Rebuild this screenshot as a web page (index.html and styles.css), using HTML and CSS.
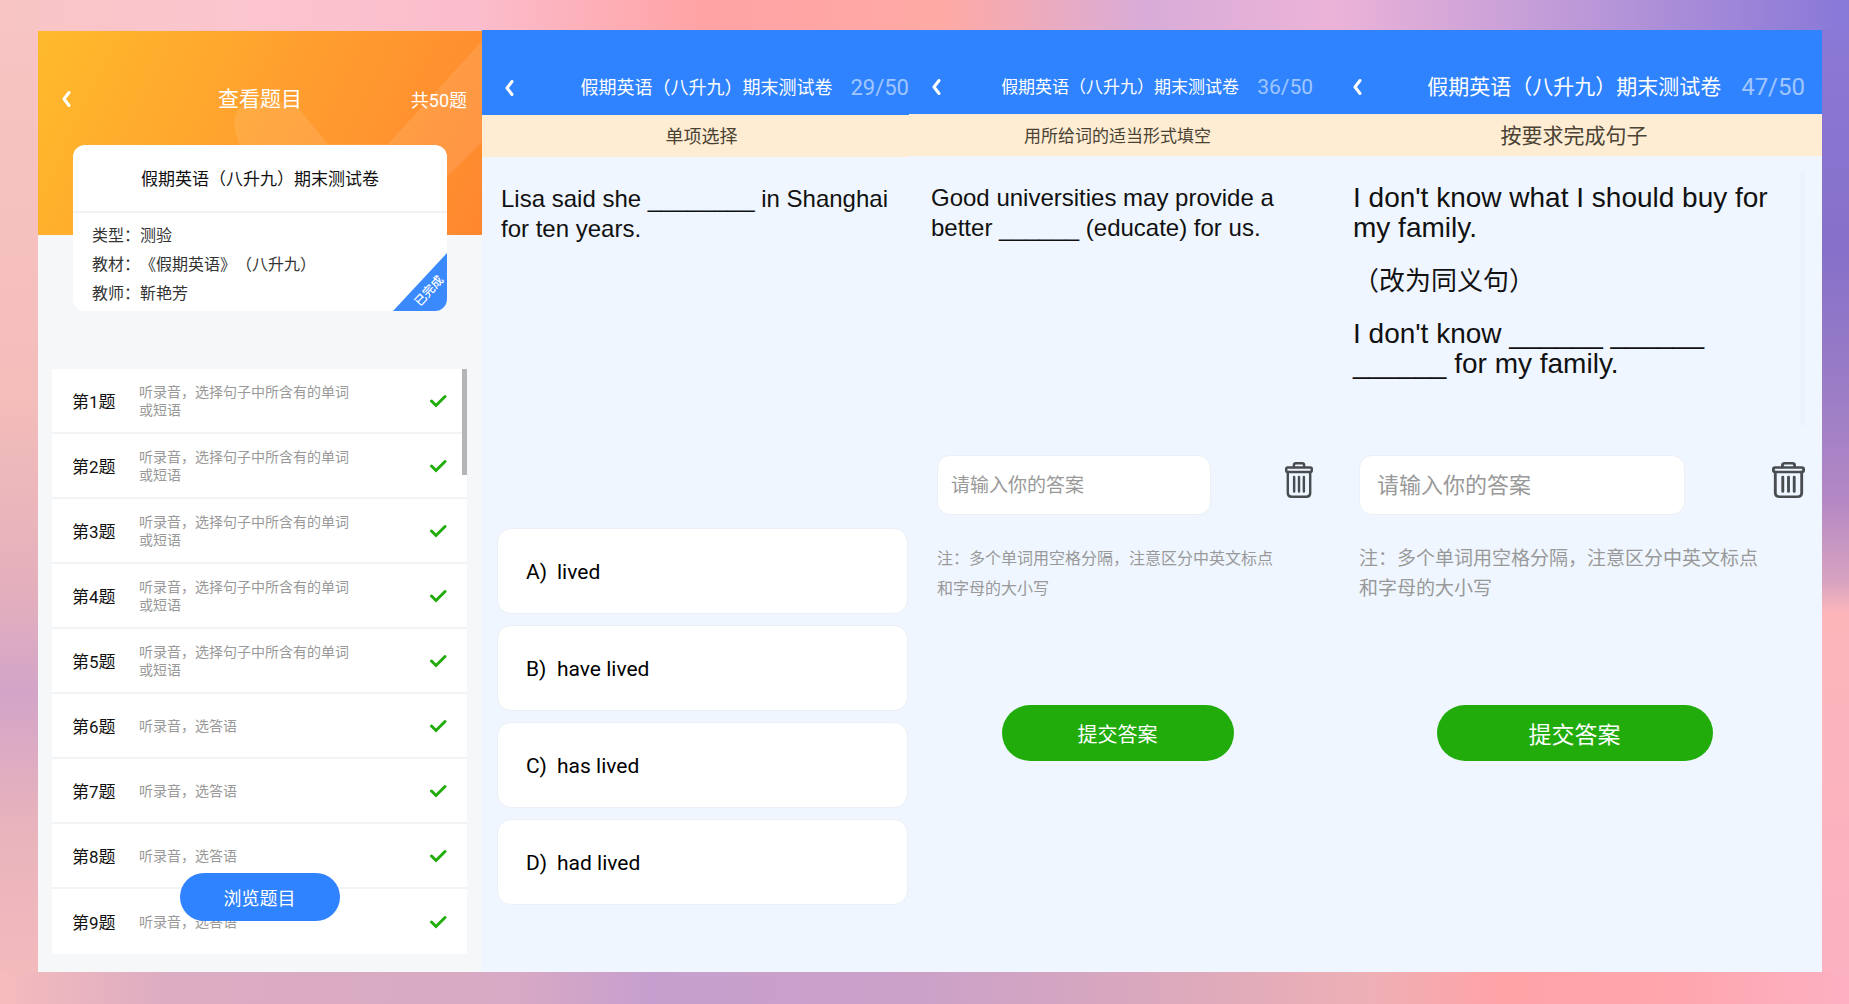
FILE: index.html
```html
<!DOCTYPE html>
<html lang="zh-CN">
<head>
  <meta charset="UTF-8" />
  <meta name="viewport" content="width=device-width, initial-scale=1" />
  <title>假期英语（八升九）期末测试卷</title>
  <link rel="stylesheet" href="styles.css">
</head>
<body>
  <!-- 图标 -->
  <svg class="sprite" aria-hidden="true">
    <symbol id="icon-back" viewBox="0 0 10 18">
      <path d="M8 2.500 L3 9 L8 15.500" fill="none" stroke="#fff" stroke-width="3" stroke-linecap="round" stroke-linejoin="round" />
    </symbol>
    <symbol id="icon-check" viewBox="0 0 18 14">
      <path d="M2.5 7 L7 11.5 L16 2.5" fill="none" stroke="#21ac0c" stroke-width="3" stroke-linecap="round" stroke-linejoin="miter" />
    </symbol>
    <symbol id="icon-trash" viewBox="0 0 30 36" preserveAspectRatio="none">
      <g fill="none" stroke="#4a4d50" stroke-width="2.6" stroke-linejoin="round" stroke-linecap="round">
        <path d="M9.5 5 V3 Q9.5 1.3 11.5 1.3 H18.5 Q20.5 1.3 20.5 3 V5" />
        <rect x="1.3" y="5.5" width="27.4" height="4.5" rx="1.5" />
        <path d="M3 10 V31 Q3 34.7 7 34.7 H23 Q27 34.7 27 31 V10" />
        <path d="M9.8 15 V29.5 M15 15 V29.5 M20.2 15 V29.5" />
      </g>
    </symbol>
  </svg>

  <main class="screens">
    <!-- 题目列表 -->
    <section class="screen screen-list" aria-label="查看题目">
      <div class="list-banner">
        <svg class="banner-shapes" viewBox="0 0 444 204" preserveAspectRatio="none" aria-hidden="true">
          <path d="M196 90 Q198 70 225 70 L256 72 L290 113 L350 113 L444 10 V111 L350 204 H290 Q200 150 196 90 Z" fill="#fff" fill-opacity="0.1" />
        </svg>
        <header class="list-header">
          <button class="back" type="button" aria-label="返回"><svg><use href="#icon-back" /></svg></button>
          <h1>查看题目</h1>
          <span class="total">共50题</span>
        </header>
      </div>

      <article class="paper-card">
        <h2>假期英语（八升九）期末测试卷</h2>
        <div class="paper-info">
          <p>类型：测验</p>
          <p>教材：《假期英语》（八升九）</p>
          <p>教师：靳艳芳</p>
        </div>
        <div class="ribbon"><span>已完成</span></div>
      </article>

      <div class="question-wrap">
        <ul class="question-list">
          <li><b>第1题</b><span>听录音，选择句子中所含有的单词或短语</span><svg><use href="#icon-check" /></svg></li>
          <li><b>第2题</b><span>听录音，选择句子中所含有的单词或短语</span><svg><use href="#icon-check" /></svg></li>
          <li><b>第3题</b><span>听录音，选择句子中所含有的单词或短语</span><svg><use href="#icon-check" /></svg></li>
          <li><b>第4题</b><span>听录音，选择句子中所含有的单词或短语</span><svg><use href="#icon-check" /></svg></li>
          <li><b>第5题</b><span>听录音，选择句子中所含有的单词或短语</span><svg><use href="#icon-check" /></svg></li>
          <li><b>第6题</b><span>听录音，选答语</span><svg><use href="#icon-check" /></svg></li>
          <li><b>第7题</b><span>听录音，选答语</span><svg><use href="#icon-check" /></svg></li>
          <li><b>第8题</b><span>听录音，选答语</span><svg><use href="#icon-check" /></svg></li>
          <li><b>第9题</b><span>听录音，选答语</span><svg><use href="#icon-check" /></svg></li>
        </ul>
        <div class="scroll-thumb"></div>
        <button class="browse" type="button">浏览题目</button>
      </div>
    </section>

    <!-- 单项选择 -->
    <section class="screen screen-choice" aria-label="单项选择">
      <header class="quiz-header">
        <button class="back" type="button" aria-label="返回"><svg><use href="#icon-back" /></svg></button>
        <h2>假期英语（八升九）期末测试卷</h2>
        <span class="progress">29/50</span>
      </header>
      <h3 class="quiz-type">单项选择</h3>
      <div class="quiz-body">
        <div class="question">
          <p>Lisa said she ________ in Shanghai<br>for ten years.</p>
        </div>
        <div class="options">
          <button type="button"><span>A)</span>lived</button>
          <button type="button"><span>B)</span>have lived</button>
          <button type="button"><span>C)</span>has lived</button>
          <button type="button"><span>D)</span>had lived</button>
        </div>
      </div>
    </section>

    <!-- 适当形式填空 -->
    <section class="screen screen-fill" aria-label="用所给词的适当形式填空">
      <header class="quiz-header">
        <button class="back" type="button" aria-label="返回"><svg><use href="#icon-back" /></svg></button>
        <h2>假期英语（八升九）期末测试卷</h2>
        <span class="progress">36/50</span>
      </header>
      <h3 class="quiz-type">用所给词的适当形式填空</h3>
      <div class="quiz-body">
        <div class="question">
          <p>Good universities may provide a<br>better ______ (educate) for us.</p>
        </div>
        <form class="answer">
          <div class="answer-row">
            <input type="text" placeholder="请输入你的答案" aria-label="答案" />
            <button class="trash" type="button" aria-label="清空"><svg><use href="#icon-trash" /></svg></button>
          </div>
          <p class="note">注：多个单词用空格分隔，注意区分中英文标点<br>和字母的大小写</p>
          <button class="submit" type="button">提交答案</button>
        </form>
      </div>
    </section>

    <!-- 按要求完成句子 -->
    <section class="screen screen-rewrite" aria-label="按要求完成句子">
      <header class="quiz-header">
        <button class="back" type="button" aria-label="返回"><svg><use href="#icon-back" /></svg></button>
        <h2>假期英语（八升九）期末测试卷</h2>
        <span class="progress">47/50</span>
      </header>
      <h3 class="quiz-type">按要求完成句子</h3>
      <div class="quiz-body">
        <div class="question">
          <p>I don't know what I should buy for<br>my family.</p>
          <p class="hint">（改为同义句）</p>
          <p>I don't know ______ ______<br>______ for my family.</p>
        </div>
        <form class="answer">
          <div class="answer-row">
            <input type="text" placeholder="请输入你的答案" aria-label="答案" />
            <button class="trash" type="button" aria-label="清空"><svg><use href="#icon-trash" /></svg></button>
          </div>
          <p class="note">注：多个单词用空格分隔，注意区分中英文标点<br>和字母的大小写</p>
          <button class="submit" type="button">提交答案</button>
        </form>
      </div>
    </section>
  </main>
</body>
</html>
```

FILE: styles.css
```css
* {
  box-sizing: border-box;
  margin: 0;
  padding: 0;
}

body {
  font-family: Roboto, 'Noto Sans CJK SC', sans-serif;
  text-spacing-trim: space-all;
  color: #111;
  min-height: 100vh;
  padding: 30px 27px 32px 38px;
  display: flex;
  /* top, bottom, left and right edges around the screens */
  background:
    linear-gradient(90deg, #f8c5c4, #fcc5d0 14%, #fbbccb 26%, #ffa3a5 38%, #ffaaa5 51%, #d8acd8 62%, #ecb3d8 72%, #c8a0d8 82%, #8878d8) top / 100% 30px no-repeat,
    linear-gradient(90deg, #f6bcbd, #dcacc2 9%, #d8a9c4 28%, #c79fce 35%, #cba1c8 50%, #deaabb 65%, #eeb0b6 74%, #ffa3a7 81%, #ffa5ac 90%, #fcb0c2) bottom / 100% 32px no-repeat,
    linear-gradient(180deg, #f8c5c4, #f3bdba 40%, #e5b0bc 58%, #d3a4c8 69%, #e8b3bc 82%, #f6bcbd) left / 50% 100% no-repeat,
    linear-gradient(180deg, #8c7ad8, #8670c9 25%, #9d7ec6 40%, #b488c4 50%, #d8a3c0 58%, #fcb6ba 61%, #fcb0c2) right / 50% 100% no-repeat;
}

button,
input {
  font: inherit;
  border: none;
  background: none;
}
button {
  cursor: pointer;
}
svg {
  display: block;
}

.sprite {
  position: absolute;
  width: 0;
  height: 0;
}

.screens {
  flex: 1;
  display: grid;
  grid-template-columns: 444fr 427fr 417fr 496fr;
}

.screen {
  display: flex;
  flex-direction: column;
  background: #eff6ff;
}

.back svg {
  width: 10px;
  height: 18px;
}

/* Question list */
.screen-list {
  background: #f5f7f8;
  margin-top: 1px;
}

.list-banner {
  position: relative;
  height: 204px;
  background: linear-gradient(115deg, #ffba2b, #ff9a2f 60%, #ff872f);
}
.banner-shapes {
  position: absolute;
  inset: 0;
  width: 100%;
  height: 100%;
}

.list-header {
  position: relative;
  display: grid;
  grid-template-columns: 1fr auto 1fr;
  align-items: center;
  padding: 54px 15px 0;
  color: #fff;
}
.list-header h1 {
  font-size: 21px;
  line-height: 28px;
  font-weight: 400;
}
.list-header .back {
  justify-self: start;
  padding-left: 8px;
}
.total {
  justify-self: end;
  font-size: 18px;
}

.paper-card {
  position: relative;
  margin: -90px 35px 0;
  background: #fff;
  border-radius: 12px;
  overflow: hidden;
}
.paper-card h2 {
  padding-top: 2px;
  font-size: 17px;
  line-height: 64px;
  font-weight: 400;
  text-align: center;
  border-bottom: 2px solid #f2f2f2;
}
.paper-info {
  padding: 8px 19px 3px;
  font-size: 16px;
  line-height: 29px;
  color: #333;
}
.ribbon {
  position: absolute;
  right: 0;
  bottom: 0;
  width: 54px;
  height: 58px;
  background: #3a89fd;
  clip-path: polygon(100% 0, 100% 100%, 0 100%);
  color: #fff;
  font-size: 12px;
  font-weight: 500;
}
.ribbon span {
  position: absolute;
  right: 0;
  bottom: 12px;
  line-height: 16px;
  transform: rotate(-47deg);
}

.question-wrap {
  position: relative;
  margin: 58px 15px 0 14px;
}
.question-list {
  list-style: none;
  background: #fff;
}
.question-list li {
  display: flex;
  align-items: center;
  height: 65px;
  padding: 0 20px;
  border-bottom: 2px solid #f2f3f4;
}
.question-list li:last-child {
  border-bottom: none;
}
.question-list b {
  width: 67px;
  font-size: 17px;
  font-weight: 400;
}
.question-list span {
  width: 220px;
  font-size: 14px;
  line-height: 18px;
  color: #999;
}
.question-list svg {
  width: 18px;
  height: 14px;
  margin-left: auto;
}
.scroll-thumb {
  position: absolute;
  top: 0;
  right: 0;
  width: 5px;
  height: 106px;
  background: #b4b5b7;
}
.browse {
  position: absolute;
  left: 50%;
  bottom: 33px;
  width: 160px;
  height: 48px;
  margin-left: -80px;
  border-radius: 24px;
  background: #3083ff;
  color: #fff;
  font-size: 18px;
}

/* Quiz screens */
.quiz-header {
  display: flex;
  align-items: center;
  height: 84px;
  padding: 30px 13px 0 22px;
  background: #3083ff;
  color: #fff;
}
.quiz-header h2 {
  margin-left: auto;
  font-size: 17px;
  line-height: 24px;
  font-weight: 400;
}
.progress {
  margin-left: 18px;
  font-size: 21px;
  color: #a0c6ff;
}
.quiz-type {
  padding-top: 2px;
  font-size: 17px;
  line-height: 40px;
  font-weight: 400;
  text-align: center;
  color: #4a4234;
  background: #ffedd3;
}
.quiz-body {
  flex: 1;
  padding: 27px 13px 0 22px;
}
.question {
  height: 272px;
  font-family: 'Liberation Sans', 'Noto Sans CJK SC', sans-serif;
  font-size: 24px;
  line-height: 30px;
}

.screen-choice .quiz-header {
  height: 85px;
  padding-right: 0;
}
.screen-choice .quiz-header h2,
.screen-choice .quiz-type {
  font-size: 18px;
}
.screen-choice .progress {
  font-size: 22px;
}
.screen-choice .quiz-type {
  padding-left: 12px;
}
.screen-choice .quiz-body {
  padding: 27px 1px 0 15px;
}
.screen-choice .question {
  height: 344px;
  padding-left: 4px;
}

.options {
  display: flex;
  flex-direction: column;
  gap: 11px;
}
.options button {
  display: flex;
  align-items: center;
  height: 86px;
  padding: 2px 0 0 28px;
  border: 1px solid #eceff5;
  border-radius: 14px;
  background: #fff;
  font-size: 21px;
}
.options span {
  width: 31px;
  text-align: left;
}

.answer {
  display: flex;
  flex-direction: column;
  padding-left: 6px;
}
.answer-row {
  display: flex;
  justify-content: space-between;
  align-items: flex-start;
}
.answer-row input {
  width: 73%;
  height: 60px;
  padding: 0 13px;
  border: 1px solid #eceff5;
  border-radius: 13px;
  background: #fff;
  font-size: 19px;
}
.answer-row input::placeholder {
  color: #999;
}
.trash svg {
  width: 28px;
  height: 36px;
  margin-top: 7px;
}
.note {
  margin-top: 29px;
  font-size: 16px;
  line-height: 30px;
  color: #999;
}
.submit {
  align-self: center;
  width: 232px;
  height: 56px;
  margin: 101px 15px 0 0;
  border-radius: 28px;
  background: #21ac0c;
  color: #fff;
  font-size: 20px;
}

/* Wide screen with larger type */
.screen-rewrite .quiz-header {
  padding: 30px 17px 0 26px;
}
.screen-rewrite .quiz-header h2,
.screen-rewrite .quiz-type {
  font-size: 21px;
}
.screen-rewrite .progress {
  margin-left: 20px;
  font-size: 24px;
}
.screen-rewrite .quiz-body {
  padding: 15px 17px 0 27px;
}
.screen-rewrite .question {
  height: 254px;
  margin-bottom: 30px;
  padding-top: 12px;
  border-right: 5px solid #ebf2fc;
  font-size: 28px;
}
.screen-rewrite .hint {
  margin: 23px 0;
  font-size: 26px;
}
.screen-rewrite .answer-row input {
  padding: 0 17px;
  font-size: 22px;
}
.screen-rewrite .trash svg {
  width: 33px;
}
.screen-rewrite .note {
  font-size: 19px;
}
.screen-rewrite .submit {
  width: 276px;
  font-size: 23px;
}
```
